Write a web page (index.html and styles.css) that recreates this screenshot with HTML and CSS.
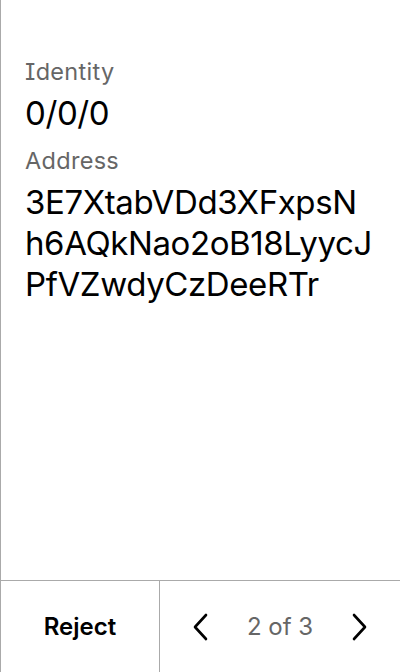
FILE: index.html
```
<!DOCTYPE html>
<html>
<head>
<meta charset="utf-8">
<link rel="stylesheet" href="styles.css">
</head>
<body>
<div class="screen">
  <main class="content">
    <div class="label">Identity</div>
    <div class="value value-id">0/0/0</div>
    <div class="label label-2">Address</div>
    <div class="value address">3E7XtabVDd3XFxpsN<br>h6AQkNao2oB18LyycJ<br>PfVZwdyCzDeeRTr</div>
  </main>
  <footer class="footer">
    <button class="reject">Reject</button>
    <div class="pager">
      <svg class="chev" viewBox="0 0 16 28" width="16" height="28"><path d="M14 2 L3 14 L14 26" fill="none" stroke="#000" stroke-width="2.6" stroke-linecap="round" stroke-linejoin="round"/></svg>
      <span class="count">2 of 3</span>
      <svg class="chev" viewBox="0 0 16 28" width="16" height="28"><path d="M2 2 L13 14 L2 26" fill="none" stroke="#000" stroke-width="2.6" stroke-linecap="round" stroke-linejoin="round"/></svg>
    </div>
  </footer>
</div>
</body>
</html>
```
FILE: styles.css
```
html, body {
  margin: 0;
  padding: 0;
  background: #fff;
}
body {
  font-family: Inter, "Noto Sans", sans-serif;
  font-optical-sizing: none;
  font-feature-settings: "cv08" 1;
  color: #000;
}
.screen {
  height: 672px;
  box-sizing: border-box;
  border-left: 1px solid #aaa;
  display: flex;
  flex-direction: column;
}
.content {
  flex: 1;
  padding: 57px 0 0 24px;
}
.label {
  font-size: 23.5px;
  line-height: 30px;
  letter-spacing: 0.3px;
  color: #666;
}
.label-2 {
  margin-top: 12px;
}
.value {
  font-size: 33px;
  line-height: 41px;
  letter-spacing: -0.4px;
}
.value-id {
  margin-top: 6px;
}
.address {
  margin-top: 6px;
}
.footer {
  height: 92px;
  box-sizing: border-box;
  border-top: 1px solid #aaa;
  display: grid;
  grid-template-columns: 159px 1fr;
}
.reject {
  font-family: inherit;
  font-feature-settings: inherit;
  font-size: 24px;
  font-weight: 600;
  background: none;
  border: none;
  border-right: 1px solid #aaa;
  color: #000;
  padding: 0;
}
.pager {
  display: flex;
  align-items: center;
  justify-content: space-between;
  padding: 0 32px 0 32px;
}
.count {
  font-size: 24px;
  color: #666;
}
```
